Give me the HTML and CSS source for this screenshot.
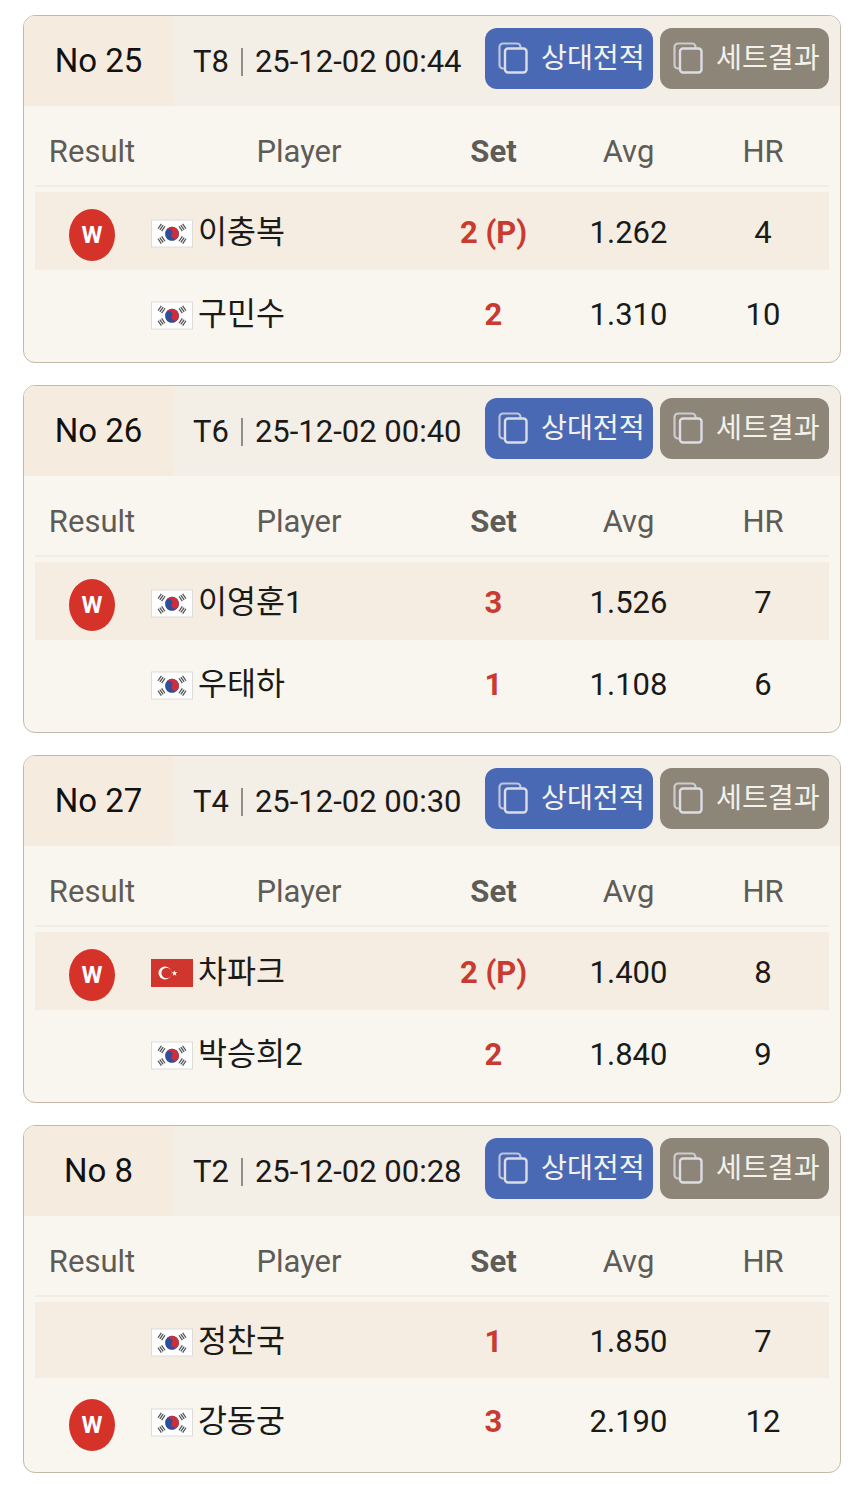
FILE: index.html
```html
<!DOCTYPE html>
<html>
<head>
    <meta charset="UTF-8">
    <title>Match list</title>
    <link rel="stylesheet" href="styles.css">
</head>
<body>
<svg class="defs" width="0" height="0">
    <symbol id="copy" viewBox="0 0 30 32">
        <path d="M6 26.500H5A3.500 3.500 0 0 1 1.500 23V5A3.500 3.500 0 0 1 5 1.500H19A3.500 3.500 0 0 1 22.500 5V6" fill="none" stroke="currentColor" stroke-width="2.200" opacity=".8"/>
        <rect x="7" y="6.500" width="21.500" height="24" rx="3" fill="none" stroke="currentColor" stroke-width="2.400"/>
    </symbol>
    <symbol id="kr" viewBox="0 0 42 28">
        <rect x=".5" y=".5" width="41" height="27" fill="#fff" stroke="#dedcd8"/>
        <g stroke="#555" stroke-width="1.300" fill="none">
            <path transform="translate(10.500 8) rotate(-56)" d="M-3 -2.200H3M-3 0H3M-3 2.200H3"/>
            <path transform="translate(31.500 8) rotate(56)" d="M-3 -2.200H3M-3 0H3M-3 2.200H3"/>
            <path transform="translate(10.500 20.500) rotate(56)" d="M-3 -2.200H3M-3 0H3M-3 2.200H3"/>
            <path transform="translate(31.500 20.500) rotate(-56)" d="M-3 -2.200H3M-3 0H3M-3 2.200H3"/>
        </g>
        <g transform="rotate(25 21 14.300)">
            <circle cx="21" cy="14.300" r="7" fill="#2f4f9e"/>
            <path d="M14 14.300A7 7 0 0 1 28 14.300A3.500 3.500 0 0 1 21 14.300A3.500 3.500 0 0 0 14 14.300Z" fill="#cd2e3a"/>
        </g>
    </symbol>
    <symbol id="tr" viewBox="0 0 42 28">
        <rect width="42" height="28" fill="#d1362e"/>
        <circle cx="14" cy="14" r="6.500" fill="#fff"/>
        <circle cx="15.600" cy="14" r="5.200" fill="#d1362e"/>
        <path d="M23.500 11.300l.7 2 2.200 0-1.700 1.300 .6 2.100-1.800-1.200-1.800 1.200 .6-2.100-1.700-1.300 2.200 0z" fill="#fff"/>
    </symbol>
</svg>

<div class="card">
    <div class="card-head">
        <div class="game-no">No 25</div>
        <div class="game-info">T8<i class="bar"></i>25-12-02 00:44</div>
        <a class="btn btn-blue"><svg class="btn-icon"><use href="#copy"/></svg>상대전적</a>
        <a class="btn btn-gray"><svg class="btn-icon"><use href="#copy"/></svg>세트결과</a>
    </div>
    <div class="table">
        <div class="row row-head">
            <div class="col-result">Result</div>
            <div class="col-player">Player</div>
            <div class="col-num col-set">Set</div>
            <div class="col-num">Avg</div>
            <div class="col-num">HR</div>
        </div>
        <div class="row row-win">
            <div class="col-result"><span class="win">W</span></div>
            <div class="col-name"><svg class="flag"><use href="#kr"/></svg>이충복</div>
            <div class="col-num score">2 (P)</div>
            <div class="col-num">1.262</div>
            <div class="col-num">4</div>
        </div>
        <div class="row">
            <div class="col-result"></div>
            <div class="col-name"><svg class="flag"><use href="#kr"/></svg>구민수</div>
            <div class="col-num score">2</div>
            <div class="col-num">1.310</div>
            <div class="col-num">10</div>
        </div>
    </div>
</div>

<div class="card">
    <div class="card-head">
        <div class="game-no">No 26</div>
        <div class="game-info">T6<i class="bar"></i>25-12-02 00:40</div>
        <a class="btn btn-blue"><svg class="btn-icon"><use href="#copy"/></svg>상대전적</a>
        <a class="btn btn-gray"><svg class="btn-icon"><use href="#copy"/></svg>세트결과</a>
    </div>
    <div class="table">
        <div class="row row-head">
            <div class="col-result">Result</div>
            <div class="col-player">Player</div>
            <div class="col-num col-set">Set</div>
            <div class="col-num">Avg</div>
            <div class="col-num">HR</div>
        </div>
        <div class="row row-win">
            <div class="col-result"><span class="win">W</span></div>
            <div class="col-name"><svg class="flag"><use href="#kr"/></svg>이영훈1</div>
            <div class="col-num score">3</div>
            <div class="col-num">1.526</div>
            <div class="col-num">7</div>
        </div>
        <div class="row">
            <div class="col-result"></div>
            <div class="col-name"><svg class="flag"><use href="#kr"/></svg>우태하</div>
            <div class="col-num score">1</div>
            <div class="col-num">1.108</div>
            <div class="col-num">6</div>
        </div>
    </div>
</div>

<div class="card">
    <div class="card-head">
        <div class="game-no">No 27</div>
        <div class="game-info">T4<i class="bar"></i>25-12-02 00:30</div>
        <a class="btn btn-blue"><svg class="btn-icon"><use href="#copy"/></svg>상대전적</a>
        <a class="btn btn-gray"><svg class="btn-icon"><use href="#copy"/></svg>세트결과</a>
    </div>
    <div class="table">
        <div class="row row-head">
            <div class="col-result">Result</div>
            <div class="col-player">Player</div>
            <div class="col-num col-set">Set</div>
            <div class="col-num">Avg</div>
            <div class="col-num">HR</div>
        </div>
        <div class="row row-win">
            <div class="col-result"><span class="win">W</span></div>
            <div class="col-name"><svg class="flag flag-tr"><use href="#tr"/></svg>차파크</div>
            <div class="col-num score">2 (P)</div>
            <div class="col-num">1.400</div>
            <div class="col-num">8</div>
        </div>
        <div class="row">
            <div class="col-result"></div>
            <div class="col-name"><svg class="flag"><use href="#kr"/></svg>박승희2</div>
            <div class="col-num score">2</div>
            <div class="col-num">1.840</div>
            <div class="col-num">9</div>
        </div>
    </div>
</div>

<div class="card">
    <div class="card-head">
        <div class="game-no">No 8</div>
        <div class="game-info">T2<i class="bar"></i>25-12-02 00:28</div>
        <a class="btn btn-blue"><svg class="btn-icon"><use href="#copy"/></svg>상대전적</a>
        <a class="btn btn-gray"><svg class="btn-icon"><use href="#copy"/></svg>세트결과</a>
    </div>
    <div class="table">
        <div class="row row-head">
            <div class="col-result">Result</div>
            <div class="col-player">Player</div>
            <div class="col-num col-set">Set</div>
            <div class="col-num">Avg</div>
            <div class="col-num">HR</div>
        </div>
        <div class="row row-win row-short">
            <div class="col-result"></div>
            <div class="col-name"><svg class="flag"><use href="#kr"/></svg>정찬국</div>
            <div class="col-num score">1</div>
            <div class="col-num">1.850</div>
            <div class="col-num">7</div>
        </div>
        <div class="row row-short">
            <div class="col-result"><span class="win">W</span></div>
            <div class="col-name"><svg class="flag"><use href="#kr"/></svg>강동궁</div>
            <div class="col-num score">3</div>
            <div class="col-num">2.190</div>
            <div class="col-num">12</div>
        </div>
    </div>
</div>
</body>
</html>
```

FILE: styles.css
```css
*{ margin:0; padding:0; box-sizing:border-box; }
html, body{ background:#fff; }
body{ padding:15px 23px 0; font:31px/1.2 Roboto, "Noto Sans CJK KR", sans-serif; color:#1a1a18; }
.defs{ position:absolute; }

.card{ height:348px; margin-bottom:22px; background:#f9f6f0; border:1px solid #c4b9a8; border-radius:12px; overflow:hidden; }
.card-head{ display:flex; align-items:center; height:90px; padding-right:11px; background:#f3eee6; }
.game-no{ display:flex; align-items:center; justify-content:center; width:149px; height:100%; background:#f5ecdf; font-size:33px; color:#111; }
.game-info{ display:flex; align-items:center; flex:1; padding:2px 0 0 20px; color:#1a1a1a; white-space:nowrap; }
.bar{ width:2px; height:28px; margin:0 12px; background:#8f8d88; }

.btn{ display:flex; align-items:center; width:168px; height:61px; margin-top:-6px; padding:2px 0 0 13px; border-radius:12px; font-size:28.200px; color:#f3f1ec; white-space:nowrap; }
.btn + .btn{ margin-left:7px; width:169px; }
.btn-blue{ background:#4a69b4; }
.btn-gray{ background:#8c8578; }
.btn-icon{ flex:none; width:30px; height:32px; margin:-2px 13px 0 0; color:#dcdce4; }

.table{ padding:0 11px; }
.row{ display:flex; align-items:center; height:90px; }
.row-head{ height:81px; margin-bottom:5px; padding-top:12px; border-bottom:2px solid #f1ede6; color:#5e5c57; }
.row-win{ height:78px; padding-top:4px; background:#f5ede1; }
.row-short{ height:88px; }
.row-win.row-short{ height:76px; padding-top:4px; }
.col-result{ display:flex; justify-content:center; width:114px; flex:none; }
.col-player{ width:277px; padding-left:23px; text-align:center; flex:none; }
.col-name{ display:flex; align-items:center; width:277px; flex:none; padding-left:2px; font-size:31.500px; }
.col-num{ width:135px; flex:none; text-align:center; }
.col-num:last-child{ width:134px; }
.col-set{ font-weight:700; }
.score{ font-weight:700; color:#c93a31; }
.flag{ flex:none; width:42px; height:29px; margin:1px 5px 0 0; }
.flag-tr{ height:28px; }
.win{ display:flex; align-items:center; justify-content:center; width:46px; height:52px; margin-top:4px; border-radius:50%; background:#d5332a; color:#fff; font-size:24px; font-weight:700; }
.row-short .win{ margin-top:6px; }
```
